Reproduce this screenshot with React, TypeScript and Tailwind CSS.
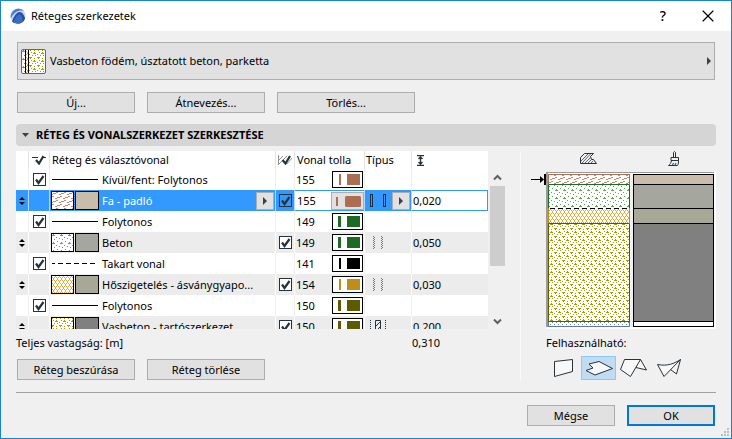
import React from "react";
import { X } from "lucide-react";

interface Pen {
  no: string;
  color: string;
  thick?: boolean;
}

interface Layer {
  kind: "line" | "fill";
  name: string;
  pen: Pen;
  dashed?: boolean;
  hatch?: string;
  surface?: string;
  type?: "finish" | "other" | "core";
  thickness?: string;
  selected?: boolean;
}

const brown: Pen = { no: "155", color: "#ac6d53" };
const green: Pen = { no: "149", color: "#1b6b24", thick: true };
const black: Pen = { no: "141", color: "#000000" };
const ochre: Pen = { no: "154", color: "#bf8d1a" };
const olive: Pen = { no: "150", color: "#5c5b00", thick: true };

const layers: Layer[] = [
  { kind: "line", name: "Kívül/fent: Folytonos", pen: brown },
  { kind: "fill", name: "Fa - padló", pen: brown, hatch: "wood", surface: "#cabcab", type: "finish", thickness: "0,020", selected: true },
  { kind: "line", name: "Folytonos", pen: green },
  { kind: "fill", name: "Beton", pen: green, hatch: "concrete", surface: "#a5a79e", type: "other", thickness: "0,050" },
  { kind: "line", name: "Takart vonal", pen: black, dashed: true },
  { kind: "fill", name: "Hőszigetelés - ásványgyapo...", pen: ochre, hatch: "wool", surface: "#a7a896", type: "other", thickness: "0,030" },
  { kind: "line", name: "Folytonos", pen: olive },
  { kind: "fill", name: "Vasbeton - tartószerkezet", pen: olive, hatch: "reinforced", surface: "#808080", type: "core", thickness: "0,200" },
];

const HatchDefs = () => (
  <svg width="0" height="0" className="absolute" aria-hidden="true" shapeRendering="crispEdges">
    <defs>
      <pattern id="wood" width="8" height="8" patternUnits="userSpaceOnUse">
        <rect width="8" height="8" fill="#fff" />
        <path d="M0 3h2v1H0zM2 2h3v1H2zM5 1h2v1H5zM4 7h2v1H4zM6 6h2v1H6zM0 6h1v1H0zM1 5h2v1H1z" fill="#c08a76" />
      </pattern>
      <pattern id="concrete" width="8" height="8" patternUnits="userSpaceOnUse">
        <rect width="8" height="8" fill="#fff" />
        <path d="M2 1h1v1h1v1H1V2h1zM6 0h1v1H6zM5 4h1v1H5zM0 5h1v1H0zM3 6h1v1H3z" fill="#5aae4a" />
      </pattern>
      <pattern id="wool" width="4" height="6" patternUnits="userSpaceOnUse">
        <rect width="4" height="6" fill="#fff" />
        <path d="M0 0h1v2H0zM1 2h1v1H1zM3 2h1v1H3zM2 3h1v2H2zM1 5h1v1H1zM3 5h1v1H3z" fill="#e3a92b" />
      </pattern>
      <pattern id="reinforced" width="8" height="8" patternUnits="userSpaceOnUse">
        <rect width="8" height="8" fill="#fff" />
        <path d="M0 0h3v1H2v1H1V1H0zM5 3h1v1h1v1H4V4h1zM5 1h1v1H5zM2 3h1v1H2zM0 5h1v1H0zM3 6h1v1H3zM6 6h1v1H6z" fill="#a0a000" />
      </pattern>
      <pattern id="air" width="4" height="4" patternUnits="userSpaceOnUse">
        <rect width="4" height="4" fill="#fff" />
        <path d="M0 0h1v1H0zM2 2h1v1H2z" fill="#6f86bd" />
      </pattern>
    </defs>
  </svg>
);

const AppLogo = () => (
  <svg width="16" height="16" viewBox="0 0 16 16" aria-hidden="true">
    <circle cx="8" cy="8" r="7.6" fill="#c3d2ee" />
    <path d="M.8 10.500C.2 5 3.500 1.200 8 .7c3-.2 5 .8 6.200 2.300C9 1.500 4 4 .8 10.500z" fill="#4b7bd0" />
    <path d="M2 13.500C4 8 6.500 4.300 9.500 4c3.200 0 4.800 3.500 5.600 6.500-1.500 4-4.500 5.200-7 5.200-2.500 0-4.800-.8-6.100-2.200z" fill="#2850a8" />
    <path d="M3.500 14.300C5.500 9 7.500 6.500 9.500 6.200c1.800.3 2.800 3.500 3 6.800-1.500 2-6 3.200-9 1.300z" fill="#3d6cc6" />
  </svg>
);

const Triangle: React.FC<{ className?: string }> = ({ className }) => (
  <svg className={className} width="4" height="8" viewBox="0 0 4 8" aria-hidden="true">
    <path d="M0 0l4 4-4 4z" fill="#404040" />
  </svg>
);

const Check: React.FC<{ label: string; selected?: boolean }> = ({ label, selected }) => (
  <span className="relative mx-auto block size-[13px]">
    <input
      type="checkbox"
      defaultChecked
      aria-label={label}
      className={`${
        selected ? "bg-[#3399ff]" : "bg-white"
      } peer block size-[13px] appearance-none border border-[#28323a]`}
    />
    <svg
      className="pointer-events-none absolute inset-0 hidden peer-checked:block"
      width="13"
      height="13"
      viewBox="0 0 13 13"
      aria-hidden="true"
    >
      <path d="M3 6.500l2.500 3.500L10.500 3" fill="none" stroke="#28323a" strokeWidth="2.200" />
    </svg>
  </span>
);

const PenSwatch: React.FC<{ pen: Pen; selected?: boolean }> = ({ pen, selected }) =>
  selected ? (
    <button
      type="button"
      aria-label="Vonal tolla"
      className="h-[18px] w-[33px] shrink-0 border border-[#adadad] bg-[#e1e1e1]"
    >
      <svg width="31" height="16" viewBox="0 0 31 16">
        <rect x="4" y="4" width="2" height="9" fill={pen.color} />
        <rect x="13" y="3" width="16" height="11" rx="1.500" fill={pen.color} />
      </svg>
    </button>
  ) : (
    <svg className="mr-px shrink-0" width="31" height="17" viewBox="0 0 31 17">
      <rect x=".5" y=".5" width="30" height="16" fill="#fff" stroke="#000" />
      <rect x={pen.thick ? 6 : 7} y="3" width={pen.thick ? 3 : 2} height="11" fill={pen.color} />
      <rect x="15" y="3" width="13" height="11" fill={pen.color} />
    </svg>
  );

const TypeSymbol: React.FC<{ type: Layer["type"] }> = ({ type }) => (
  <svg width="17" height="13" viewBox="0 0 17 13" aria-hidden="true">
    {type === "finish" && (
      <g fill="none" stroke="#1d2f40">
        <rect x=".5" y=".5" width="2" height="12" />
        <rect x="13.500" y=".5" width="2" height="12" />
      </g>
    )}
    {type === "other" && (
      <g stroke="#70787e" strokeDasharray="1 1">
        <path d="M3.500 0v13M11.500 0v13" />
        <path d="M4.500 1v12M12.500 1v12" />
      </g>
    )}
    {type === "core" && (
      <g stroke="#28323a">
        <path d="M.5 0v13M15.500 0v13" strokeDasharray="1 1" />
        <path d="M5.500.5h5v12h-5zM6 6l4-4M6 11l4-4" fill="none" />
      </g>
    )}
  </svg>
);

const LayerRow: React.FC<{ layer: Layer }> = ({ layer }) => {
  const { kind, name, pen, selected } = layer;
  const fill = kind === "fill";
  const tone = selected
    ? "bg-[#3399ff] border-[#b8d8f8]"
    : fill
      ? "bg-[#ececec] border-white"
      : "bg-white border-[#efefef]";
  const field = selected ? "border-y border-[#3399ff] bg-white" : "";

  return (
    <tr className={`${tone} h-[21px]`}>
      <td className="border-r border-inherit">
        {fill && (
          <svg className="mx-auto" width="6" height="8" viewBox="0 0 6 8" aria-hidden="true">
            <path d="M3 0l3 3H0zM0 5h6L3 8z" fill="#000" />
          </svg>
        )}
      </td>
      <td className="border-r border-inherit">{!fill && <Check label={name} />}</td>
      <td className="border-r border-inherit">
        <div className="flex h-[21px] items-center">
          {fill ? (
            <span className="ml-px flex shrink-0 gap-px">
              <svg width="23" height="19">
                <rect x=".5" y=".5" width="22" height="18" fill={`url(#${layer.hatch})`} stroke="#000" />
              </svg>
              <span className="h-[19px] w-6 border border-black" style={{ backgroundColor: layer.surface }} />
            </span>
          ) : (
            <svg className="ml-0.5 mr-px shrink-0" width="46" height="1">
              <path d="M0 .5h46" stroke="#000" strokeDasharray={layer.dashed ? "5 3" : undefined} strokeDashoffset="2" />
            </svg>
          )}
          <span className={`${selected ? "text-white" : ""} ml-[3px] flex-1 truncate`}>{name}</span>
          {selected && (
            <button
              type="button"
              aria-label="Építőanyag választása"
              className="mr-px flex h-[18px] w-[18px] items-center justify-center border border-[#adadad] bg-[#e1e1e1]"
            >
              <Triangle />
            </button>
          )}
        </div>
      </td>
      <td className="border-r border-inherit">{fill && <Check label={`${name} tolla`} selected={selected} />}</td>
      <td className="border-r border-inherit">
        <div className={`${field} flex h-[21px] items-center justify-between`}>
          {selected ? (
            <input aria-label="Toll" defaultValue={pen.no} className="w-8 bg-transparent pl-0.5 outline-none" />
          ) : (
            <span className="pl-px">{pen.no}</span>
          )}
          <PenSwatch pen={pen} selected={selected} />
        </div>
      </td>
      <td className="border-r border-inherit">
        {fill && (
          <div className="flex items-center justify-between pl-[5px]">
            <TypeSymbol type={layer.type} />
            {selected && (
              <button
                type="button"
                aria-label="Típus választása"
                className="mr-px flex h-[18px] w-[18px] items-center justify-center border border-[#adadad] bg-[#e1e1e1]"
              >
                <Triangle />
              </button>
            )}
          </div>
        )}
      </td>
      <td>
        {selected ? (
          <input
            aria-label="Vastagság"
            defaultValue={layer.thickness}
            className="block h-[21px] w-full border-y border-r border-[#3399ff] bg-white pl-px outline-none"
          />
        ) : (
          <span className="pl-px">{layer.thickness}</span>
        )}
      </td>
    </tr>
  );
};

const LayerTable = () => (
  <div className="flex h-[178px]">
    <div className="min-w-0 flex-1 overflow-hidden">
      <table className="w-full table-fixed border-separate border-spacing-0 bg-white text-left">
        <colgroup>
          <col className="w-[13px]" />
          <col className="w-[21px]" />
          <col />
          <col className="w-[19px]" />
          <col className="w-[70px]" />
          <col className="w-[47px]" />
          <col className="w-[76px]" />
        </colgroup>
        <thead>
          <tr className="h-[18px] border-[#e4e4e4]">
            <th className="border-r border-inherit" />
            <th className="border-r border-inherit">
              <svg className="mx-auto" width="14" height="10" viewBox="0 0 14 10" aria-label="Vonal látszik">
                <path d="M0 2.500h6M11 2.500h3" stroke="#28323a" />
                <path d="M4 5l3 3.500L11.500 1" fill="none" stroke="#28323a" strokeWidth="2.200" />
              </svg>
            </th>
            <th className="border-r border-inherit pl-0.5 font-normal">Réteg és választóvonal</th>
            <th className="border-r border-inherit">
              <svg className="mx-auto" width="14" height="10" viewBox="0 0 14 10" aria-label="Határvonal látszik">
                <path d="M.5 0v10M1 5l4-4M1 9l8-8M9 9l5-6" stroke="#8c9296" />
                <path d="M4.500 5l3 3.500L12 1" fill="none" stroke="#28323a" strokeWidth="2.200" />
              </svg>
            </th>
            <th className="border-r border-inherit pl-0.5 font-normal">Vonal tolla</th>
            <th className="border-r border-inherit pl-px font-normal">Típus</th>
            <th>
              <svg className="ml-1" width="9" height="11" viewBox="0 0 9 11" aria-label="Vastagság">
                <path d="M1 .5h7M1 10.500h7M4.500 2v7M2.500 4l2-2 2 2M2.500 7l2 2 2-2" fill="none" stroke="#28323a" strokeWidth="1.300" />
              </svg>
            </th>
          </tr>
        </thead>
        <tbody>
          {layers.map((layer, i) => (
            <LayerRow key={i} layer={layer} />
          ))}
        </tbody>
      </table>
    </div>
    <div className="ml-0.5 mt-[18px] flex w-[15px] flex-col items-center">
      <svg className="my-[5px]" width="9" height="7" viewBox="0 0 9 7" aria-hidden="true">
        <path d="M1 5.500l3.500-3.500L8 5.500" fill="none" stroke="#606060" strokeWidth="2" />
      </svg>
      <div className="h-20 w-full bg-[#cdcdcd]" />
      <svg className="mb-1 mt-auto" width="9" height="7" viewBox="0 0 9 7" aria-hidden="true">
        <path d="M1 1.500L4.500 5 8 1.500" fill="none" stroke="#606060" strokeWidth="2" />
      </svg>
    </div>
  </div>
);

const Preview = () => (
  <svg width="185" height="157" viewBox="-15 0 185 157" role="img" aria-label="Szerkezet előnézete">
    <path d="M-15 7.500h11" stroke="#000" />
    <path d="M-6 4v7l4-3.500zM-2 2h2v11h-2z" fill="#000" />
    <rect width="170" height="157" fill="#fff" />
    <path d="M0 0h168v1H2v154H0z" fill="#9a9a9a" />
    <rect x="84" y="2" width="3" height="153" fill="#f0f0f0" />
    <rect x="2" y="2" width="82" height="10" fill="url(#wood)" />
    <rect x="2" y="12" width="82" height="24" fill="url(#concrete)" />
    <rect x="2" y="36" width="82" height="15" fill="url(#wool)" />
    <rect x="2" y="51" width="82" height="98" fill="url(#reinforced)" />
    <rect x="2" y="149" width="82" height="6" fill="url(#air)" />
    <path d="M2.500 12V2.500h81V12" fill="none" stroke="#ac6d53" />
    <path d="M2.500 36V12.500h81V36" fill="none" stroke="#1b6b24" />
    <path d="M2.500 51V36M83.500 36v15" stroke="#bf8d1a" />
    <path d="M4 36.500h79" stroke="#000" strokeDasharray="5 3" />
    <path d="M2.500 149V51.500h81V149M2 149.500h82" fill="none" stroke="#5c5b00" />
    <path d="M2.500 150v4.500h81V150" fill="none" stroke="#5a72b0" />
    <g stroke="#000">
      <rect x="87.500" y="2.500" width="80" height="10" fill="#cabcab" />
      <rect x="87.500" y="12.500" width="80" height="24" fill="#a5a79e" />
      <rect x="87.500" y="36.500" width="80" height="15" fill="#a7a896" />
      <rect x="87.500" y="51.500" width="80" height="98" fill="#808080" />
      <rect x="87.500" y="149.500" width="80" height="5" fill="#fff" />
    </g>
  </svg>
);

// wall, slab, roof, shell
const usages = [
  { label: "Fal", d: "M8.500 5.500L26.500 3.500v12L8.500 20.500z" },
  { label: "Födém", d: "M8 8l10-2.500 13.500 7L14 19l-9-4.500 7-2.500z" },
  { label: "Tető", d: "M8.500 3.500h16L14.500 20.500l-10-7zM24.500 3.500l6 10.500-10.500-2.500" },
  { label: "Héj", d: "M6.500 8.500c10 2 17-1 23-5L13 20.500zM29.500 3.500l-4 14.500-6-4.500" },
];

const PreviewPanel = () => (
  <aside className="ml-[15px] flex w-[196px] shrink-0 flex-col items-end border-l border-[#fafafa]">
    <div className="flex h-[21px] w-[170px] justify-between pl-[34px] pr-9">
      <svg width="17" height="11" viewBox="0 0 17 11" className="mt-0.5" aria-label="Kitöltések">
        <path d="M.5 10.500v-6l4-4h9l-3 3 1 3h2l3 4z" fill="none" stroke="#28323a" />
        <path d="M1 8l7-7M2 10l8.500-9M5 10l6-6M8 10l3.500-3.500M11 10l2-2" stroke="#5b656c" />
      </svg>
      <svg width="12" height="15" viewBox="0 0 12 15" aria-label="Felületek">
        <path d="M5.500 6V1.500l1-1 1 1V6M3 6.500h7.500v3H3zM3.500 9.500C3 12 2 13.500.5 14.500h9c1-1.500 1-3 1-5M4.500 14l1-2M7 14l1-2" fill="none" stroke="#28323a" />
      </svg>
    </div>
    <Preview />
    <div className="mt-1 flex h-5 w-[170px] items-center">Felhasználható:</div>
    <div className="mt-[3px] flex w-[170px]">
      {usages.map((u) => (
        <button
          key={u.label}
          type="button"
          aria-label={u.label}
          className={`${
            u.label === "Födém" ? "border-[#90c8f6] bg-[#c0dcf3]" : "border-transparent"
          } flex h-6 w-[35px] items-center justify-center border`}
        >
          <svg className="shrink-0" width="35" height="24" viewBox="0 0 35 24">
            <path d={u.d} fill="#f8f8f8" stroke="#28323a" strokeLinejoin="round" />
          </svg>
        </button>
      ))}
    </div>
  </aside>
);

const DialogButton: React.FC<{ className: string; children: React.ReactNode }> = ({ className, children }) => (
  <button type="button" className={`${className} flex h-[21px] items-center justify-center bg-[#e1e1e1]`}>
    {children}
  </button>
);

const App = () => {
  return (
    <main className="relative min-h-screen border border-[#1883d7] bg-[#f0f0f0] font-['Noto_Sans','Open_Sans',sans-serif] text-[11px] leading-4 text-black">
      <HatchDefs />
      <header className="flex h-[30px] items-center bg-white pl-[9px] pr-[13px]">
        <AppLogo />
        <h1 className="ml-[5px]">Réteges szerkezetek</h1>
        <button type="button" aria-label="Súgó" className="ml-auto w-4 text-sm font-medium">
          ?
        </button>
        <button type="button" aria-label="Bezárás" className="ml-[27px]">
          <X className="size-5" strokeWidth={1.4} />
        </button>
      </header>

      <div className="px-[15px] pb-[11px] pt-[11px]">
        <button
          type="button"
          className="mx-px flex h-[38px] w-[calc(100%-2px)] items-center border border-[#adadad] bg-[#e1e1e1] pl-[3px] pr-[3px]"
        >
          <svg width="25" height="25" viewBox="0 0 25 25" aria-hidden="true">
            <rect x=".5" y=".5" width="24" height="24" rx="1.500" fill="#fff" />
            <rect x="1" y="1" width="3" height="23" fill="url(#concrete)" />
            <rect x="5" y="1" width="2" height="23" fill="url(#wool)" />
            <rect x="8" y="1" width="16" height="23" fill="url(#reinforced)" />
            <path d="M4.500 1v23M7.500 1v23" stroke="#000" />
            <rect x=".5" y=".5" width="24" height="24" rx="1.500" fill="none" stroke="#4a68a8" />
          </svg>
          <span className="ml-1">Vasbeton födém, úsztatott beton, parketta</span>
          <Triangle className="ml-auto" />
        </button>

        <div className="mx-px mt-3 flex gap-3">
          <DialogButton className="w-[118px] border border-[#adadad]">Új...</DialogButton>
          <DialogButton className="w-[118px] border border-[#adadad]">Átnevezés...</DialogButton>
          <DialogButton className="w-[138px] border border-[#adadad]">Törlés...</DialogButton>
        </div>

        <h2 className="mt-[11px] flex h-[22px] items-center rounded-sm bg-[#d5d5d5] pl-1.5 font-bold">
          <svg className="mr-[7px]" width="7" height="4" viewBox="0 0 7 4" aria-hidden="true">
            <path d="M0 0h7L3.500 4z" fill="#404040" />
          </svg>
          RÉTEG ÉS VONALSZERKEZET SZERKESZTÉSE
        </h2>

        <div className="mt-[5px] flex">
          <div className="min-w-0 flex-1">
            <LayerTable />
            <div className="mt-1 flex h-5 items-center justify-between">
              <span>Teljes vastagság: [m]</span>
              <span className="w-[93px]">0,310</span>
            </div>
            <div className="mx-px mt-1.5 flex gap-3">
              <DialogButton className="w-[118px] border border-[#adadad]">Réteg beszúrása</DialogButton>
              <DialogButton className="w-[118px] border border-[#adadad]">Réteg törlése</DialogButton>
            </div>
          </div>
          <PreviewPanel />
        </div>

        <footer className="mt-3 flex justify-end gap-3 border-t border-[#a0a0a0] pr-px pt-3">
          <DialogButton className="w-[88px] border border-[#adadad]">Mégse</DialogButton>
          <DialogButton className="w-[88px] border-2 border-[#0078d7]">OK</DialogButton>
        </footer>
      </div>

      <svg className="absolute bottom-0.5 right-0.5" width="8" height="8" viewBox="0 0 8 8" aria-hidden="true">
        <path d="M6 0h2v2H6zM3 3h2v2H3zM6 3h2v2H6zM0 6h2v2H0zM3 6h2v2H3zM6 6h2v2H6z" fill="#bfbfbf" />
      </svg>
    </main>
  );
};

export default App;
